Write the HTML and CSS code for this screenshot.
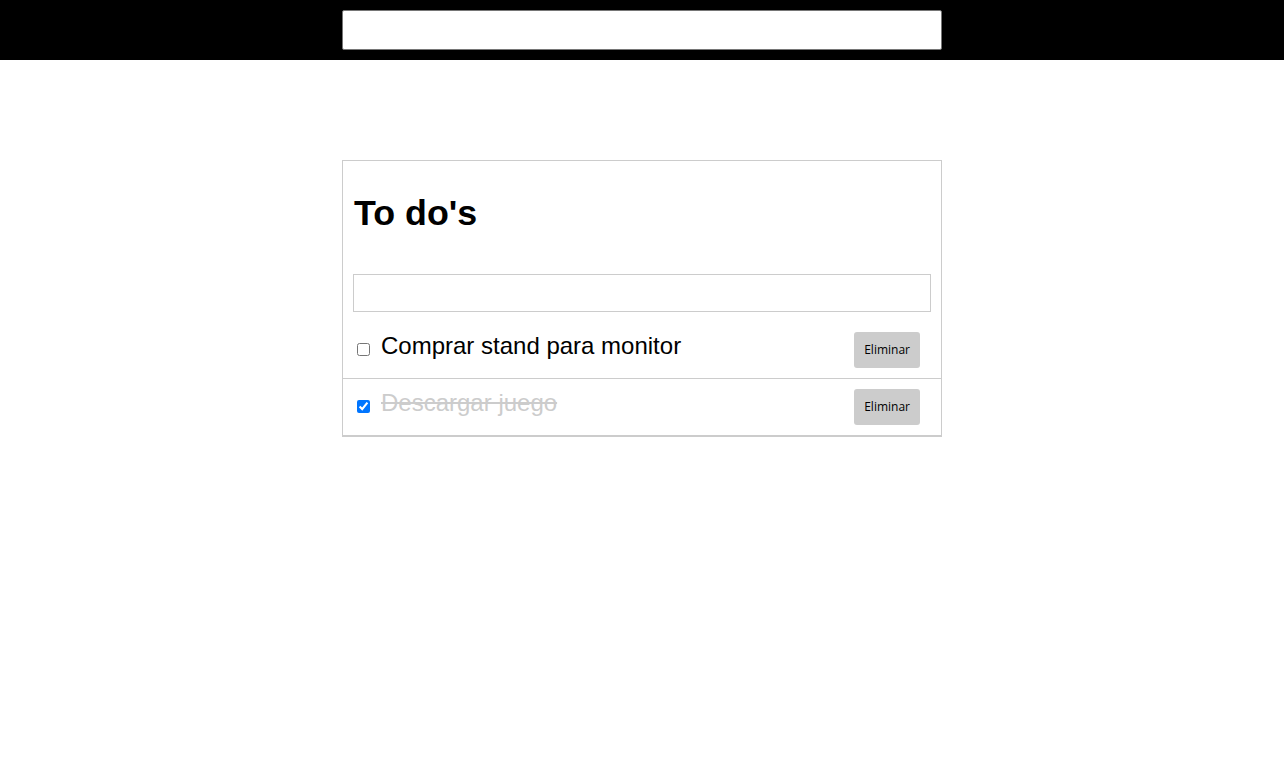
FILE: index.html
```html
<!DOCTYPE html>
<html lang="es">
<head>
<meta charset="utf-8">
<title>To do's</title>
<link rel="stylesheet" href="styles.css">
</head>
<body>
<header class="topbar">
  <input class="search" type="text" aria-label="Buscar">
</header>
<main class="page">
  <section class="card">
    <h1 class="title">To do's</h1>
    <input class="new-todo" type="text" aria-label="Nueva tarea">
    <ul class="list">
      <li class="item">
        <input class="check" type="checkbox">
        <span class="text">Comprar stand para monitor</span>
        <button class="remove" type="button">Eliminar</button>
      </li>
      <li class="item item-done">
        <input class="check" type="checkbox" checked>
        <span class="text">Descargar juego</span>
        <button class="remove" type="button">Eliminar</button>
      </li>
    </ul>
  </section>
</main>
</body>
</html>
```

FILE: styles.css
```css
html, body {
  margin: 0;
  padding: 0;
  background: #fff;
}

body {
  font-family: "Liberation Sans", Arial, sans-serif;
  color: #000;
}

.topbar {
  background: #000;
  padding: 10px 0;
  display: flex;
  justify-content: center;
}

.search {
  width: 600px;
  height: 40px;
  box-sizing: border-box;
  border: 1px solid #767676;
  border-radius: 2px;
  background: #fff;
  padding: 0 4px;
  margin: 0;
}

.page {
  padding-top: 100px;
  display: flex;
  justify-content: center;
}

.card {
  width: 600px;
  box-sizing: border-box;
  border: 1px solid #ccc;
}

.title {
  margin: 0;
  padding: 32px 11px 0;
  font-size: 35.8px;
  line-height: 40px;
  font-weight: bold;
}

.new-todo {
  display: block;
  margin: 41px 10px 10px;
  width: calc(100% - 20px);
  height: 38px;
  box-sizing: border-box;
  border: 1px solid #ccc;
  border-radius: 0;
  padding: 0 6px;
  font-size: 16px;
}

.list {
  margin: 0;
  padding: 0;
  list-style: none;
}

.item {
  display: flex;
  align-items: flex-start;
  padding: 10px 21px 10px 10px;
  border-bottom: 1px solid #ccc;
}

.check {
  width: 13px;
  height: 13px;
  margin: 2px 3px 4px 4px;
  align-self: center;
  flex: none;
}

.text {
  flex: 1;
  margin-left: 8px;
  font-size: 24px;
  line-height: normal;
}

.item-done .text {
  color: #ccc;
  text-decoration: line-through;
}

.remove {
  flex: none;
  height: 36px;
  padding: 0 10px;
  border: none;
  border-radius: 3px;
  background: #ccc;
  color: #000;
  font-family: "Open Sans", "Noto Sans", sans-serif;
  font-size: 12px;
  line-height: 16px;
}
```
